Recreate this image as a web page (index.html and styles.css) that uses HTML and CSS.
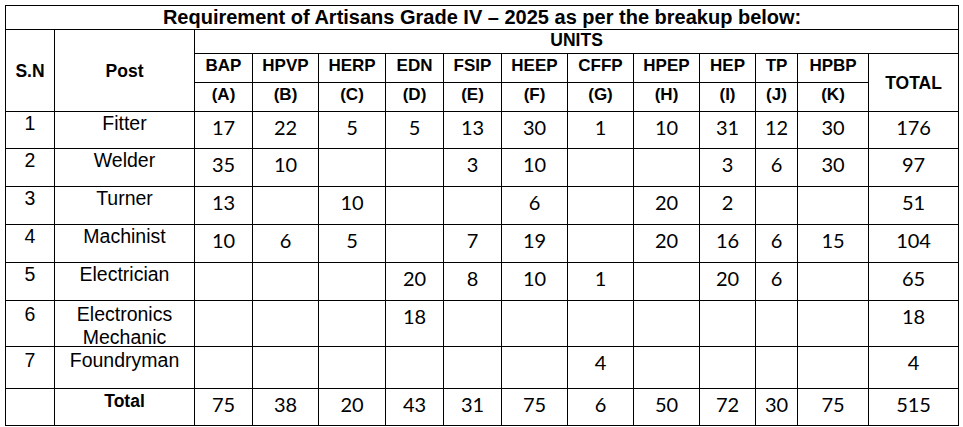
FILE: index.html
```html
<!DOCTYPE html>
<html>
<head>
<meta charset="utf-8">
<link rel="stylesheet" href="styles.css">
</head>
<body>
<table class="req">
  <colgroup>
    <col class="c-sn"><col class="c-post">
    <col class="c-a"><col class="c-b"><col class="c-c"><col class="c-d"><col class="c-e"><col class="c-f">
    <col class="c-g"><col class="c-h"><col class="c-i"><col class="c-j"><col class="c-k"><col class="c-tot">
  </colgroup>
  <tr class="r-title"><th colspan="14" class="title">Requirement of Artisans Grade IV – 2025 as per the breakup below:</th></tr>
  <tr class="r-units">
    <th rowspan="3" class="hc">S.N</th>
    <th rowspan="3" class="hc">Post</th>
    <th colspan="12" class="units">UNITS</th>
  </tr>
  <tr class="r-code">
    <th class="code">BAP</th><th class="code">HPVP</th><th class="code">HERP</th><th class="code">EDN</th><th class="code">FSIP</th><th class="code">HEEP</th><th class="code">CFFP</th><th class="code">HPEP</th><th class="code">HEP</th><th class="code">TP</th><th class="code">HPBP</th>
    <th rowspan="2" class="hc">TOTAL</th>
  </tr>
  <tr class="r-letter">
    <th class="code">(A)</th><th class="code">(B)</th><th class="code">(C)</th><th class="code">(D)</th><th class="code">(E)</th><th class="code">(F)</th><th class="code">(G)</th><th class="code">(H)</th><th class="code">(I)</th><th class="code">(J)</th><th class="code">(K)</th>
  </tr>
  <tr class="r-d1">
    <td class="txt">1</td><td class="txt">Fitter</td>
    <td class="num">17</td><td class="num">22</td><td class="num">5</td><td class="num">5</td><td class="num">13</td><td class="num">30</td><td class="num">1</td><td class="num">10</td><td class="num">31</td><td class="num">12</td><td class="num">30</td><td class="num">176</td>
  </tr>
  <tr class="r-d2">
    <td class="txt">2</td><td class="txt">Welder</td>
    <td class="num">35</td><td class="num">10</td><td class="num"></td><td class="num"></td><td class="num">3</td><td class="num">10</td><td class="num"></td><td class="num"></td><td class="num">3</td><td class="num">6</td><td class="num">30</td><td class="num">97</td>
  </tr>
  <tr class="r-d2">
    <td class="txt">3</td><td class="txt">Turner</td>
    <td class="num">13</td><td class="num"></td><td class="num">10</td><td class="num"></td><td class="num"></td><td class="num">6</td><td class="num"></td><td class="num">20</td><td class="num">2</td><td class="num"></td><td class="num"></td><td class="num">51</td>
  </tr>
  <tr class="r-d2">
    <td class="txt">4</td><td class="txt">Machinist</td>
    <td class="num">10</td><td class="num">6</td><td class="num">5</td><td class="num"></td><td class="num">7</td><td class="num">19</td><td class="num"></td><td class="num">20</td><td class="num">16</td><td class="num">6</td><td class="num">15</td><td class="num">104</td>
  </tr>
  <tr class="r-d2">
    <td class="txt">5</td><td class="txt">Electrician</td>
    <td class="num"></td><td class="num"></td><td class="num"></td><td class="num">20</td><td class="num">8</td><td class="num">10</td><td class="num">1</td><td class="num"></td><td class="num">20</td><td class="num">6</td><td class="num"></td><td class="num">65</td>
  </tr>
  <tr class="r-d6">
    <td class="txt"><div class="fit">6</div></td><td class="txt"><div class="fit">Electronics<br>Mechanic</div></td>
    <td class="num"></td><td class="num"></td><td class="num"></td><td class="num">18</td><td class="num"></td><td class="num"></td><td class="num"></td><td class="num"></td><td class="num"></td><td class="num"></td><td class="num"></td><td class="num">18</td>
  </tr>
  <tr class="r-d7">
    <td class="txt low">7</td><td class="txt low">Foundryman</td>
    <td class="num"></td><td class="num"></td><td class="num"></td><td class="num"></td><td class="num"></td><td class="num"></td><td class="num">4</td><td class="num"></td><td class="num"></td><td class="num"></td><td class="num"></td><td class="num">4</td>
  </tr>
  <tr class="r-tot">
    <td class="txt"></td><td class="txt bold">Total</td>
    <td class="num">75</td><td class="num">38</td><td class="num">20</td><td class="num">43</td><td class="num">31</td><td class="num">75</td><td class="num">6</td><td class="num">50</td><td class="num">72</td><td class="num">30</td><td class="num">75</td><td class="num">515</td>
  </tr>
</table>
</body>
</html>
```
FILE: styles.css
```css
html, body {
  margin: 0;
  padding: 0;
  background: #ffffff;
}

.req {
  margin: 5px 0 0 5px;
  border-collapse: collapse;
  table-layout: fixed;
  width: 953px;
  color: #000000;
}

.req th,
.req td {
  border: 1px solid #000000;
  padding: 0;
  text-align: center;
  vertical-align: top;
  overflow: visible;
  white-space: nowrap;
}

.c-sn { width: 49px; }
.c-post { width: 140px; }
.c-a { width: 58px; }
.c-b { width: 66px; }
.c-c { width: 67px; }
.c-d { width: 58px; }
.c-e { width: 58px; }
.c-f { width: 66px; }
.c-g { width: 66px; }
.c-h { width: 66px; }
.c-i { width: 56px; }
.c-j { width: 42px; }
.c-k { width: 71px; }
.c-tot { width: 90px; }

.r-title { height: 24px; }
.r-units { height: 24px; }
.r-code { height: 29px; }
.r-letter { height: 29px; }
.r-d1 { height: 37px; }
.r-d2 { height: 38px; }
.r-d6 { height: 46px; }
.r-d7 { height: 42px; }
.r-tot { height: 37px; }

.title {
  font-family: "Liberation Sans", Arial, sans-serif;
  font-weight: bold;
  font-size: 20px;
  line-height: 22px;
  padding-top: 1px;
}

.units {
  font-family: "Liberation Sans", Arial, sans-serif;
  font-weight: bold;
  font-size: 17.5px;
  line-height: 20px;
  padding-top: 1px;
}

.hc {
  font-family: "Liberation Sans", Arial, sans-serif;
  font-weight: bold;
  font-size: 17.5px;
  line-height: 20px;
  vertical-align: middle !important;
}

.code {
  font-family: "Liberation Sans", Arial, sans-serif;
  font-weight: bold;
  font-size: 17px;
  line-height: 20px;
  padding-top: 2px !important;
}

.txt {
  font-family: "Liberation Sans", Arial, sans-serif;
  font-size: 19.5px;
  line-height: 23px;
}

.fit {
  margin-top: 2px;
  height: 40px;
  overflow: visible;
}

.txt.low {
  padding-top: 2px !important;
}

.txt.bold {
  font-weight: bold;
  font-size: 17.5px;
  padding-top: 1px !important;
}

.num {
  font-family: "Lato", "Open Sans", sans-serif;
  font-size: 20px;
  line-height: 23px;
  padding-top: 4px !important;
}
```
